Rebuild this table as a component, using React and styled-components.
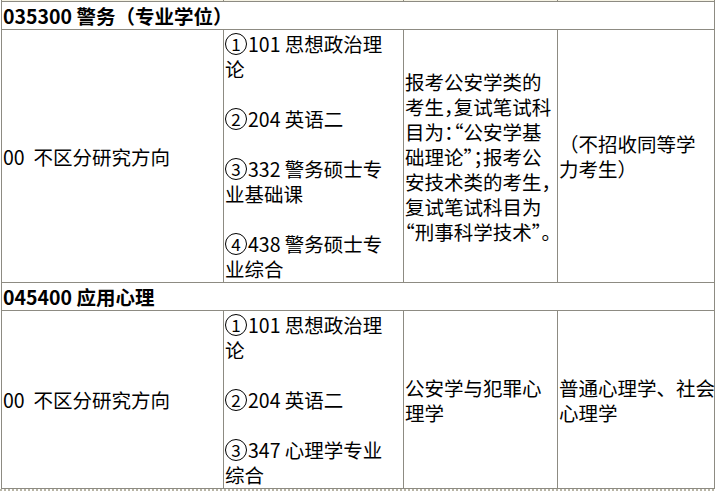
import styled, { createGlobalStyle } from "styled-components";

const GlobalStyle = createGlobalStyle`
  html, body {
    margin: 0;
    padding: 0;
    background: #fff;
  }
  body {
    font-family: "Noto Sans CJK SC", "Noto Sans", sans-serif;
    font-size: 19.5px;
    color: #000;
  }
`;

const groups = [
  {
    code: "035300",
    name: "警务（专业学位）",
    direction: "00\u00a0 不区分研究方向",
    courses: [
      { n: 1, lines: ["101 思想政治理", "论"] },
      { n: 2, lines: ["204 英语二"] },
      { n: 3, lines: ["332 警务硕士专", "业基础课"] },
      { n: 4, lines: ["438 警务硕士专", "业综合"] },
    ],
    retest: [
      "报考公安学类的",
      "考生，复试笔试科",
      "目为：“公安学基",
      "础理论”；报考公",
      "安技术类的考生，",
      "复试笔试科目为",
      "“刑事科学技术”。",
    ],
    extra: ["（不招收同等学", "力考生）"],
  },
  {
    code: "045400",
    name: "应用心理",
    direction: "00\u00a0 不区分研究方向",
    courses: [
      { n: 1, lines: ["101 思想政治理", "论"] },
      { n: 2, lines: ["204 英语二"] },
      { n: 3, lines: ["347 心理学专业", "综合"] },
    ],
    retest: ["公安学与犯罪心", "理学"],
    extra: ["普通心理学、社会", "心理学"],
  },
];

function App() {
  return (
    <>
      <GlobalStyle />
      <Sheet>
        <colgroup>
          <col style={{ width: 222 }} />
          <col style={{ width: 180 }} />
          <col style={{ width: 154 }} />
          <col style={{ width: 157 }} />
        </colgroup>
        <tbody>
          <tr>
            <Stub />
            <Stub />
            <Stub />
            <Stub />
          </tr>
          {groups.map((g) => (
            <Group key={g.code} group={g} />
          ))}
        </tbody>
      </Sheet>
      <Rule />
    </>
  );
}

function Group({ group }) {
  return (
    <>
      <tr>
        <GroupCell colSpan={4}>
          {group.code} {group.name}
        </GroupCell>
      </tr>
      <tr>
        <Cell>{group.direction}</Cell>
        <Cell $top>
          {group.courses.map((c) => (
            <Course key={c.n}>
              {c.lines.map((l, i) => (
                <Line key={l}>
                  {i === 0 && <Circled>{c.n}</Circled>}
                  {l}
                </Line>
              ))}
            </Course>
          ))}
        </Cell>
        <Cell $narrowPunct>
          {group.retest.map((l) => (
            <Line key={l}>{l}</Line>
          ))}
        </Cell>
        <Cell>
          {group.extra.map((l) => (
            <Line key={l}>{l}</Line>
          ))}
        </Cell>
      </tr>
    </>
  );
}

const Sheet = styled.table`
  border-collapse: collapse;
  table-layout: fixed;
  width: 714px;
  margin-left: 1px;
`;

const Stub = styled.td`
  height: 1px;
  padding: 0;
  border: 1px solid #8d8b82;
  border-top: none;
  background: #f6f3e4;
`;

const GroupCell = styled.td`
  padding: 1px 1px;
  line-height: 25px;
  font-weight: 700;
  border: 1px solid #8d8b82;
  white-space: nowrap;
`;

const Cell = styled.td`
  padding: 1px 1px;
  line-height: 25px;
  vertical-align: ${(p) => (p.$top ? "top" : "middle")};
  border: 1px solid #8d8b82;
  font-feature-settings: ${(p) => (p.$narrowPunct ? '"halt"' : "normal")};
`;

const Course = styled.div`
  & + & {
    margin-top: 25px;
  }
`;

const Line = styled.div`
  display: flex;
  align-items: center;
  white-space: nowrap;
  height: 25px;
`;

const Circled = styled.span`
  display: inline-flex;
  align-items: center;
  justify-content: center;
  box-sizing: border-box;
  flex: none;
  width: 22px;
  height: 22px;
  margin-right: 1px;
  border: 1px solid #000;
  border-radius: 50%;
  font-size: 17px;
  line-height: 1;
`;

const Rule = styled.div`
  width: 714px;
  border-top: 2px dotted #b8b5a6;
`;

export default App;
